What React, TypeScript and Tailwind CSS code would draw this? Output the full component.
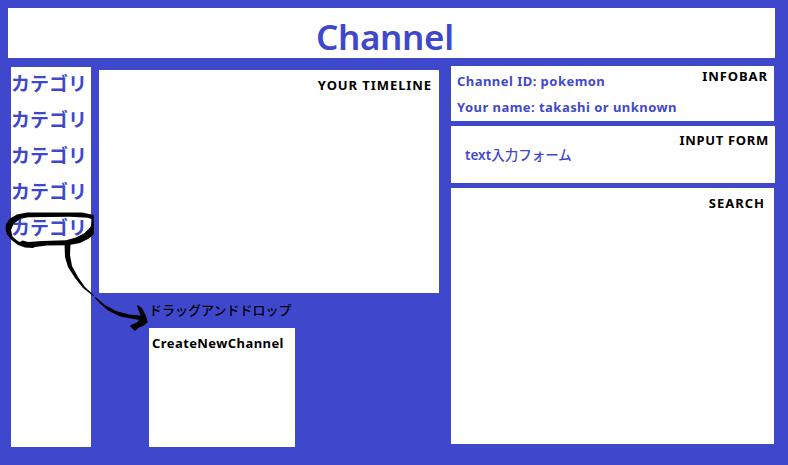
const categories = ['カテゴリ', 'カテゴリ', 'カテゴリ', 'カテゴリ', 'カテゴリ'];

function HandDrawnArrow() {
  return (
    <svg className="pointer-events-none absolute left-0 top-[205px]" width="155" height="130" viewBox="0 205 155 130" fill="#000">
      <path
        fillRule="evenodd"
        d="M27 212.500 L82 212.500 L93.800 215 L93.800 234.500 L88 239 L80 243 L68 245.300 L47 245.500 L35 247 L33 248 L25 247.500 L18 245 L11.500 240 L7 234.500 L5.500 229 L6 224 L10 218.500 L17 214.500 Z M28 217.300 L20 219 L13.500 224 L11 230 L12.500 236.500 L17 240.500 L20 242 L22.500 240.500 L28 242 L42 241 L66 240.300 L76 237.500 L84 233.500 L90.500 227 L92.500 219.500 L88 217.800 L70 216.800 Z"
      />
      <path d="M64.500 243 L70.500 243 L70 255 L72 266 L78 277 L85 287 L94 295.200 L93.500 296.300 L83 288 L75 278 L68 267 L65 257 Z" />
      <path d="M95.500 297 L105 305 L116 311 L129 314.500 L140 315.500 L141 317 L137 306 L138 305.300 L142 308 L145.500 315 L147.800 322 L144 325.500 L139 327.500 L135 331 L129.800 326 L132 324.500 L137 322.500 L139 320 L134 319 L120 316.500 L108 310.500 L100 303.500 L95 298 Z" />
    </svg>
  );
}

export default function App() {
  return (
    <div className="relative h-[465px] w-[788px] overflow-hidden whitespace-nowrap bg-[#3f48cc] pl-2 pt-2 font-['Noto_Sans','Noto_Sans_CJK_JP',sans-serif] text-[13px] font-bold leading-[18px] text-black">
      <header className="flex h-[50px] w-[767px] bg-white pl-[308px] pt-[5px]">
        <h1 className="text-[35px] font-semibold leading-[48px] tracking-[-0.35px] text-[#3f48cc]">Channel</h1>
      </header>
      <div className="flex items-start pl-[3px]">
        <nav className="mt-[9px] h-[380px] w-[80px] bg-white">
          {categories.map((name, index) => (
            <div key={index} className="h-9 text-[19px] leading-[34px] text-[#3f48cc]">{name}</div>
          ))}
        </nav>
        <main className="ml-2 mt-3 w-[340px]">
          <section className="flex h-[223px] justify-end bg-white pr-[7px] pt-[6px]">
            <h2 className="tracking-[0.92px]">YOUR TIMELINE</h2>
          </section>
          <div className="ml-[50px] flex h-[35px] items-center pb-[2px] font-medium">ドラッグアンドドロップ</div>
          <section className="ml-[50px] h-[119px] w-[146px] bg-white pl-[3px] pt-[6px]">
            <h2 className="tracking-[0.42px]">CreateNewChannel</h2>
          </section>
        </main>
        <aside className="ml-3 mt-2 flex w-[324px] flex-col gap-[5px]">
          <section className="flex h-[55px] w-[323px] justify-between bg-white pl-1.5 pr-[6px]">
            <div className="flex flex-col gap-2 pt-[6px] tracking-[0.46px] text-[#3f48cc]">
              <p>Channel ID: pokemon</p>
              <p>Your name: takashi or unknown</p>
            </div>
            <h2 className="-ml-4 pt-[1px] tracking-[0.95px]">INFOBAR</h2>
          </section>
          <section className="flex h-[57px] justify-between bg-white pl-3.5 pr-1.5">
            <p className="pt-[20px] text-[13.5px] font-medium text-[#3f48cc]"><span className="font-semibold">text</span>入力フォーム</p>
            <h2 className="pt-[5px] tracking-[0.7px]">INPUT FORM</h2>
          </section>
          <section className="flex h-[256px] w-[323px] justify-end bg-white pr-[9px] pt-[6px]">
            <h2 className="tracking-[1px]">SEARCH</h2>
          </section>
        </aside>
      </div>
      <HandDrawnArrow />
    </div>
  );
}
